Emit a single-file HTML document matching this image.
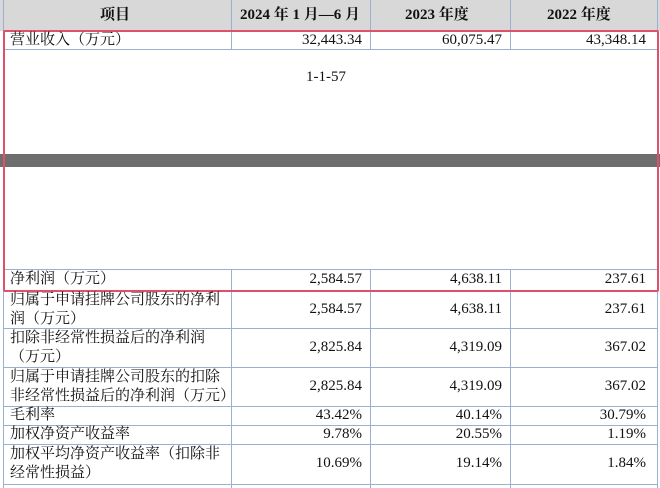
<!DOCTYPE html>
<html><head><meta charset="utf-8"><style>
body{margin:0;width:660px;height:488px;background:#fff;position:relative;overflow:hidden;font-family:"Liberation Serif","Noto Serif CJK SC",serif;font-size:15px;color:#111}
.d{position:absolute}
.h{background:#d8d8d8;top:0;height:31px;left:0;width:660px}
.vl{position:absolute;width:1px;background:#9bb0d0}
.hl{position:absolute;height:1px;background:#9bb0d0;left:3px;width:654px}
.t{position:absolute;line-height:19px;white-space:nowrap}
.r{text-align:right}
.b{font-weight:bold;font-size:15px}
</style></head><body>
<div class="d h"></div>
<div class="vl" style="left:3px;top:0;height:488px"></div>
<div class="vl" style="left:231px;top:0;height:49px"></div>
<div class="vl" style="left:370px;top:0;height:49px"></div>
<div class="vl" style="left:510px;top:0;height:49px"></div>
<div class="vl" style="left:657px;top:0;height:488px"></div>
<div class="vl" style="left:231px;top:269px;height:219px"></div>
<div class="vl" style="left:370px;top:269px;height:219px"></div>
<div class="vl" style="left:510px;top:269px;height:219px"></div>
<div class="hl" style="top:31px"></div>
<div class="hl" style="top:49px"></div>
<div class="hl" style="top:269px"></div>
<div class="hl" style="top:290px"></div>
<div class="hl" style="top:328px"></div>
<div class="hl" style="top:367px"></div>
<div class="hl" style="top:406px"></div>
<div class="hl" style="top:425px"></div>
<div class="hl" style="top:444px"></div>
<div class="hl" style="top:484px"></div>
<div class="d" style="left:0;top:154px;width:660px;height:13px;background:#6e6e6e"></div>
<div class="d" style="left:3px;top:30px;width:652px;height:258px;border:2px solid #e05068;border-radius:2px"></div>
<div class="t b" style="left:100px;top:6px">项目</div>
<div class="t b" style="left:240px;top:6px">2024 年 1 月—6 月</div>
<div class="t b" style="left:405px;top:6px">2023 年度</div>
<div class="t b" style="left:547px;top:6px">2022 年度</div>
<div class="t" style="left:10px;top:31px">营业收入（万元）</div>
<div class="t r" style="right:298px;top:31px">32,443.34</div>
<div class="t r" style="right:158px;top:31px">60,075.47</div>
<div class="t r" style="right:14px;top:31px">43,348.14</div>
<div class="t" style="left:306px;top:68px">1-1-57</div>
<div class="t" style="left:10px;top:270px">净利润（万元）</div>
<div class="t r" style="right:298px;top:270px">2,584.57</div>
<div class="t r" style="right:158px;top:270px">4,638.11</div>
<div class="t r" style="right:14px;top:270px">237.61</div>
<div class="t" style="left:10px;top:291px">归属于申请挂牌公司股东的净利<br>润（万元）</div>
<div class="t r" style="right:298px;top:300px">2,584.57</div>
<div class="t r" style="right:158px;top:300px">4,638.11</div>
<div class="t r" style="right:14px;top:300px">237.61</div>
<div class="t" style="left:10px;top:329px">扣除非经常性损益后的净利润<br>（万元）</div>
<div class="t r" style="right:298px;top:338px">2,825.84</div>
<div class="t r" style="right:158px;top:338px">4,319.09</div>
<div class="t r" style="right:14px;top:338px">367.02</div>
<div class="t" style="left:10px;top:368px">归属于申请挂牌公司股东的扣除<br>非经常性损益后的净利润（万元）</div>
<div class="t r" style="right:298px;top:377px">2,825.84</div>
<div class="t r" style="right:158px;top:377px">4,319.09</div>
<div class="t r" style="right:14px;top:377px">367.02</div>
<div class="t" style="left:10px;top:406px">毛利率</div>
<div class="t r" style="right:298px;top:406px">43.42%</div>
<div class="t r" style="right:158px;top:406px">40.14%</div>
<div class="t r" style="right:14px;top:406px">30.79%</div>
<div class="t" style="left:10px;top:425px">加权净资产收益率</div>
<div class="t r" style="right:298px;top:425px">9.78%</div>
<div class="t r" style="right:158px;top:425px">20.55%</div>
<div class="t r" style="right:14px;top:425px">1.19%</div>
<div class="t" style="left:10px;top:445px">加权平均净资产收益率（扣除非<br>经常性损益）</div>
<div class="t r" style="right:298px;top:454px">10.69%</div>
<div class="t r" style="right:158px;top:454px">19.14%</div>
<div class="t r" style="right:14px;top:454px">1.84%</div>
</body></html>
